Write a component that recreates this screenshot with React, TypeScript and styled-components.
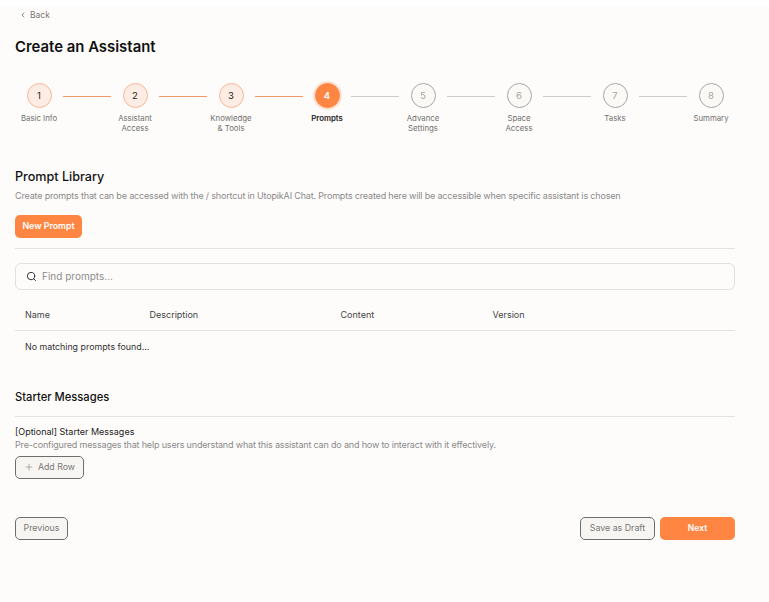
import React from 'react';
import styled, { createGlobalStyle } from 'styled-components';
import { ChevronLeft, Plus, Search } from 'lucide-react';

const GlobalStyle = createGlobalStyle`
  html, body {
    margin: 0;
    padding: 0;
    background: #ffffff;
    font-family: 'Inter', 'Noto Sans', sans-serif;
    -webkit-font-smoothing: antialiased;
  }
  * { box-sizing: border-box; }
`;

const Page = styled.div`
  width: 769px;
  height: 596px;
  margin-top: 6px;
  padding: 0 34px 0 15px;
  background: #fefcfa;
  overflow: hidden;
`;

const BackLink = styled.a`
  display: flex;
  align-items: center;
  gap: 3px;
  height: 18px;
  padding-left: 4px;
  font-size: 8.5px;
  color: #777;
`;

const Title = styled.h1`
  margin: 12px 0 0;
  font-size: 14.9px;
  line-height: 22px;
  font-weight: 600;
  color: #111;
`;

const Stepper = styled.div`
  display: flex;
  margin-top: 24px;
  height: 64px;
`;

const Step = styled.div`
  flex: 0 0 48px;
  min-width: 0;
  display: flex;
  flex-direction: column;
  align-items: center;
`;

const Circle = styled.div<{ $state: 'done' | 'active' | 'todo' }>`
  width: 25px;
  height: 25px;
  margin-top: 1px;
  border-radius: 50%;
  display: flex;
  align-items: center;
  justify-content: center;
  font-size: 9.5px;
  font-weight: ${p => (p.$state === 'active' ? 600 : 400)};
  color: ${p => (p.$state === 'done' ? '#222' : p.$state === 'active' ? '#fff' : '#a5a5a5')};
  background: ${p => (p.$state === 'done' ? '#fcece3' : p.$state === 'active' ? '#ff8642' : '#fbf9f6')};
  border: 1px solid ${p => (p.$state === 'done' ? '#f5b99a' : p.$state === 'active' ? '#ff8642' : '#a8a8a8')};
  box-shadow: ${p => (p.$state === 'active' ? '0 0 0 2px #fde3d3' : 'none')};
`;

const StepLabel = styled.div<{ $active: boolean }>`
  flex: none;
  margin-top: 5px;
  width: 72px;
  text-align: center;
  font-size: 7.8px;
  line-height: 10px;
  font-weight: ${p => (p.$active ? 600 : 400)};
  color: ${p => (p.$active ? '#222' : '#707070')};
`;

const Connector = styled.div<{ $done: boolean }>`
  flex: 0 0 48px;
  height: 1px;
  margin-top: 14px;
  background: ${p => (p.$done ? '#ee9a6c' : '#cfcdcb')};
`;

const SectionTitle = styled.h2<{ $size: number }>`
  margin: 0;
  font-size: ${p => p.$size}px;
  line-height: 18px;
  font-weight: 500;
  color: #111;
`;

const Library = styled.section`
  margin-top: 22px;
`;

const Hint = styled.p`
  margin: 0;
  font-size: 9px;
  line-height: 12px;
  letter-spacing: -0.17px;
  color: #8a8a8a;
  white-space: nowrap;
`;

const LibraryHint = styled(Hint)`
  margin-top: 4px;
`;

const NewButton = styled.button`
  display: block;
  margin-top: 13px;
  width: 67px;
  height: 23px;
  padding: 0 0 2px;
  border: 0;
  border-radius: 5px;
  background: #ff8642;
  color: #fff;
  font: 600 8.8px 'Inter', sans-serif;
`;

const Rule = styled.hr`
  margin: 0;
  border: 0;
  border-top: 1px solid #e4e2e0;
`;

const LibraryRule = styled(Rule)`
  margin-top: 10px;
`;

const SearchBox = styled.div`
  display: flex;
  align-items: center;
  gap: 5px;
  height: 27px;
  margin-top: 14px;
  padding: 0 10px 1px;
  border: 1px solid #e2e0de;
  border-radius: 6px;
  font-size: 10px;
  color: #8c8c8c;
`;

const TableHead = styled.div`
  display: grid;
  grid-template-columns: 124.5px 191px 152px 1fr;
  align-items: center;
  height: 41px;
  padding: 8px 0 0 10px;
  border-bottom: 1px solid #e4e2e0;
  font-size: 9px;
  color: #444;
`;

const EmptyRow = styled.div`
  height: 30px;
  padding-left: 10px;
  display: flex;
  align-items: center;
  font-size: 8.85px;
  color: #333;
`;

const Starter = styled.section`
  margin-top: 27px;
`;

const StarterRule = styled(Rule)`
  margin-top: 10px;
`;

const FieldLabel = styled.div`
  margin-top: 9px;
  font-size: 9px;
  line-height: 12px;
  font-weight: 400;
  color: #222;
`;

const FieldHint = styled(Hint)`
  margin-top: 1px;
`;

const OutlineButton = styled.button<{ $width: number }>`
  display: flex;
  align-items: center;
  justify-content: center;
  gap: 4px;
  width: ${p => p.$width}px;
  height: 23px;
  padding: 0 0 2px;
  border: 1px solid #6e6e6e;
  border-radius: 5px;
  background: #f7f5f2;
  color: #777;
  font: 400 8.8px 'Inter', sans-serif;
`;

const AddRow = styled.div`
  margin-top: 5px;
`;

const Footer = styled.div`
  display: flex;
  align-items: center;
  justify-content: space-between;
  margin-top: 38px;
`;

const FooterRight = styled.div`
  display: flex;
  gap: 5px;
`;

const NextButton = styled.button`
  width: 75px;
  height: 23px;
  padding: 0 0 2px;
  border: 0;
  border-radius: 5px;
  background: #ff8642;
  color: #fff;
  font: 600 8.5px 'Inter', sans-serif;
`;

const steps = [
  ['Basic Info'],
  ['Assistant', 'Access'],
  ['Knowledge', '& Tools'],
  ['Prompts'],
  ['Advance', 'Settings'],
  ['Space', 'Access'],
  ['Tasks'],
  ['Summary'],
];

const current = 3;

function App() {
  return (
    <>
      <GlobalStyle />
      <Page>
        <BackLink>
          <ChevronLeft size={8} color="#555" strokeWidth={2} />
          Back
        </BackLink>
        <Title>Create an Assistant</Title>

        <Stepper>
          {steps.map((label, i) => (
            <React.Fragment key={label[0]}>
              <Step>
                <Circle $state={i < current ? 'done' : i === current ? 'active' : 'todo'}>{i + 1}</Circle>
                <StepLabel $active={i === current}>
                  {label.map(line => (
                    <div key={line}>{line}</div>
                  ))}
                </StepLabel>
              </Step>
              {i < steps.length - 1 && <Connector $done={i < current} />}
            </React.Fragment>
          ))}
        </Stepper>

        <Library>
          <SectionTitle $size={12.6}>Prompt Library</SectionTitle>
          <LibraryHint>
            Create prompts that can be accessed with the / shortcut in UtopikAI Chat. Prompts created here will be accessible when specific assistant is chosen
          </LibraryHint>
          <NewButton>New Prompt</NewButton>
          <LibraryRule />
          <SearchBox>
            <Search size={11} color="#222" strokeWidth={2} />
            Find prompts...
          </SearchBox>
          <TableHead>
            <span>Name</span>
            <span>Description</span>
            <span>Content</span>
            <span>Version</span>
          </TableHead>
          <EmptyRow>No matching prompts found...</EmptyRow>
        </Library>

        <Starter>
          <SectionTitle $size={11.2}>Starter Messages</SectionTitle>
          <StarterRule />
          <FieldLabel>[Optional] Starter Messages</FieldLabel>
          <FieldHint>Pre-configured messages that help users understand what this assistant can do and how to interact with it effectively.</FieldHint>
          <AddRow>
            <OutlineButton $width={69}>
              <Plus size={10} color="#888" strokeWidth={1.5} />
              Add Row
            </OutlineButton>
          </AddRow>
        </Starter>

        <Footer>
          <OutlineButton $width={53}>Previous</OutlineButton>
          <FooterRight>
            <OutlineButton $width={75}>Save as Draft</OutlineButton>
            <NextButton>Next</NextButton>
          </FooterRight>
        </Footer>
      </Page>
    </>
  );
}

export default App;
